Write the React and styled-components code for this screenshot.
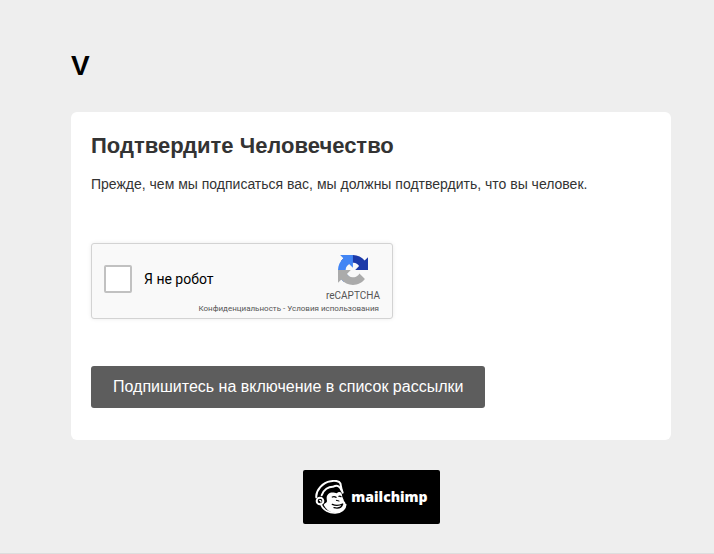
import React from "react";
import styled, { createGlobalStyle } from "styled-components";

const GlobalStyle = createGlobalStyle`
  *, *::before, *::after { box-sizing: border-box; }
  body {
    margin: 0;
    background: #eeeeee;
    color: #333333;
    font-family: "Liberation Sans", Arial, Helvetica, sans-serif;
  }
`;

const Page = styled.div`
  min-height: 100vh;
  padding: 48px 0 28px 28px;
  border-bottom: 1px solid #dddddd;
`;

const Column = styled.main`
  max-width: 600px;
  margin: 0 auto;
`;

const ListName = styled.h1`
  margin: 0 0 28px;
  color: #000000;
  font-size: 28px;
  line-height: 36px;
  font-weight: 700;
`;

const Card = styled.form`
  padding: 20px 20px 32px;
  border-radius: 6px;
  background: #ffffff;
`;

const Title = styled.h2`
  margin: 0;
  font-size: 22px;
  line-height: 28px;
  font-weight: 700;
`;

const Lead = styled.p`
  margin: 14px 0 48px;
  font-size: 14px;
  line-height: 21px;
`;

const Captcha = styled.div`
  display: flex;
  flex-direction: column;
  width: 302px;
  max-width: 100%;
  height: 76px;
  padding: 10px 12px 4px 12px;
  border: 1px solid #d3d3d3;
  border-radius: 3px;
  background: #f9f9f9;
  box-shadow: 0 0 4px rgba(0, 0, 0, 0.08);
  font-family: Roboto, sans-serif;
`;

const CaptchaRow = styled.div`
  display: flex;
  justify-content: space-between;
`;

const RobotLabel = styled.label`
  display: flex;
  align-items: center;
  gap: 12px;
  height: 50px;
  color: #000000;
  font-size: 14px;
  line-height: 21px;
`;

const Tick = styled.input`
  appearance: none;
  width: 28px;
  height: 28px;
  margin: 0;
  border: 2px solid #c1c1c1;
  border-radius: 2px;
  background: #ffffff;
`;

const Brand = styled.div`
  display: flex;
  flex-direction: column;
  align-items: center;
  gap: 5px;
  padding-top: 1px;
  color: #555555;
  font-size: 10px;
  line-height: 12px;
`;

const Legal = styled.div`
  align-self: flex-end;
  margin-right: 1px;
  color: #555555;
  font-size: 8px;
  line-height: 10px;
`;

const LegalLink = styled.a`
  color: inherit;
  text-decoration: none;
`;

const Submit = styled.button`
  display: block;
  margin-top: 47px;
  padding: 10px 22px;
  border: 0;
  border-radius: 3px;
  background: #5d5d5d;
  color: #ffffff;
  font: 16px/22px "Liberation Sans", Arial, sans-serif;
  cursor: pointer;
`;

const Badge = styled.a`
  display: flex;
  align-items: center;
  justify-content: center;
  gap: 4px;
  width: 137px;
  height: 54px;
  margin: 30px auto 0;
  border-radius: 2px;
  background: #000000;
  color: #ffffff;
  font: 800 14px/20px "Open Sans", sans-serif;
  text-decoration: none;
`;

const RecaptchaLogo = () => (
  <svg width="30" height="30" viewBox="0 0 64 64" aria-hidden="true">
    <path fill="#1c3aa9" d="M64 31.955l-.033-1.37V4.687l-7.16 7.16C50.948 4.674 42.033.093 32.05.093c-10.4 0-19.622 4.96-25.458 12.64l11.736 11.86a15.55 15.55 0 0 1 4.754-5.334c2.05-1.6 4.952-2.906 8.968-2.906.485 0 .86.057 1.135.163 4.976.393 9.288 3.14 11.828 7.124l-8.307 8.307L64 31.953" />
    <path fill="#4285f4" d="M31.862.094l-1.37.033H4.594l7.16 7.16C4.58 13.147 0 22.06 0 32.046c0 10.4 4.96 19.622 12.64 25.458L24.5 45.768a15.55 15.55 0 0 1-5.334-4.754c-1.6-2.05-2.906-4.952-2.906-8.968 0-.485.057-.86.163-1.135.393-4.976 3.14-9.288 7.124-11.828l8.307 8.307L31.86.095" />
    <path fill="#ababab" d="M.001 32.045l.033 1.37v25.898l7.16-7.16c5.86 7.173 14.774 11.754 24.76 11.754 10.4 0 19.622-4.96 25.458-12.64l-11.736-11.86a15.55 15.55 0 0 1-4.754 5.334c-2.05 1.6-4.952 2.906-8.968 2.906-.485 0-.86-.057-1.135-.163-4.976-.393-9.288-3.14-11.828-7.124l8.307-8.307c-10.522.04-22.4.066-27.295-.005" />
  </svg>
);

const MonkeyLogo = () => (
  <svg width="33" height="34" viewBox="48 40 99 102" fill="none" strokeLinecap="round" strokeLinejoin="round" aria-hidden="true">
    {/* cap, with its brim */}
    <path stroke="#fff" strokeWidth="6" d="M55 92C53 72 74 47 98 44C108 41 124 43 127 50C129 57 128 62 134 78" />
    <path stroke="#fff" strokeWidth="6" d="M71 86C76 69 92 59 106 60C118 54 127 59 131 72" />
    {/* face */}
    <path fill="#fff" d="M91 82C100 74 111 79 116 80C124 72 132 76 132 86C132 93 137 96 138 104C147 109 143 129 126 136C108 143 88 136 77 115C80 108 86 110 87 103C86 96 84 89 91 82Z" />
    <path stroke="#fff" strokeWidth="5" d="M69 114C76 131 94 140 112 139C130 138 142 127 143 114" />
    {/* ear */}
    <circle cx="66" cy="103" r="10" fill="#000" stroke="#fff" strokeWidth="6" />
    <path stroke="#fff" strokeWidth="4" d="M65 101Q69 101 69 106" />
    {/* eyes, nose and mouth */}
    <path stroke="#000" strokeWidth="4" d="M103 91Q109 88 114 92M123 89Q126 87 129 90" />
    <path stroke="#000" strokeWidth="3" d="M115 101L123 103" />
    <path stroke="#000" strokeWidth="4" d="M103 113Q117 120 134 112Q129 128 108 123" />
  </svg>
);

export default function App() {
  return (
    <>
      <GlobalStyle />
      <Page>
        <Column>
          <ListName>V</ListName>
          <Card onSubmit={(e) => e.preventDefault()}>
            <Title>Подтвердите Человечество</Title>
            <Lead>Прежде, чем мы подписаться вас, мы должны подтвердить, что вы человек.</Lead>
            <Captcha>
              <CaptchaRow>
                <RobotLabel htmlFor="robot">
                  <Tick id="robot" type="checkbox" />
                  Я не робот
                </RobotLabel>
                <Brand>
                  <RecaptchaLogo />
                  reCAPTCHA
                </Brand>
              </CaptchaRow>
              <Legal>
                <LegalLink href="#privacy">Конфиденциальность</LegalLink>
                {" - "}
                <LegalLink href="#terms">Условия использования</LegalLink>
              </Legal>
            </Captcha>
            <Submit type="submit">Подпишитесь на включение в список рассылки</Submit>
          </Card>
          <Badge href="#mailchimp">
            <MonkeyLogo />
            mailchimp
          </Badge>
        </Column>
      </Page>
    </>
  );
}
